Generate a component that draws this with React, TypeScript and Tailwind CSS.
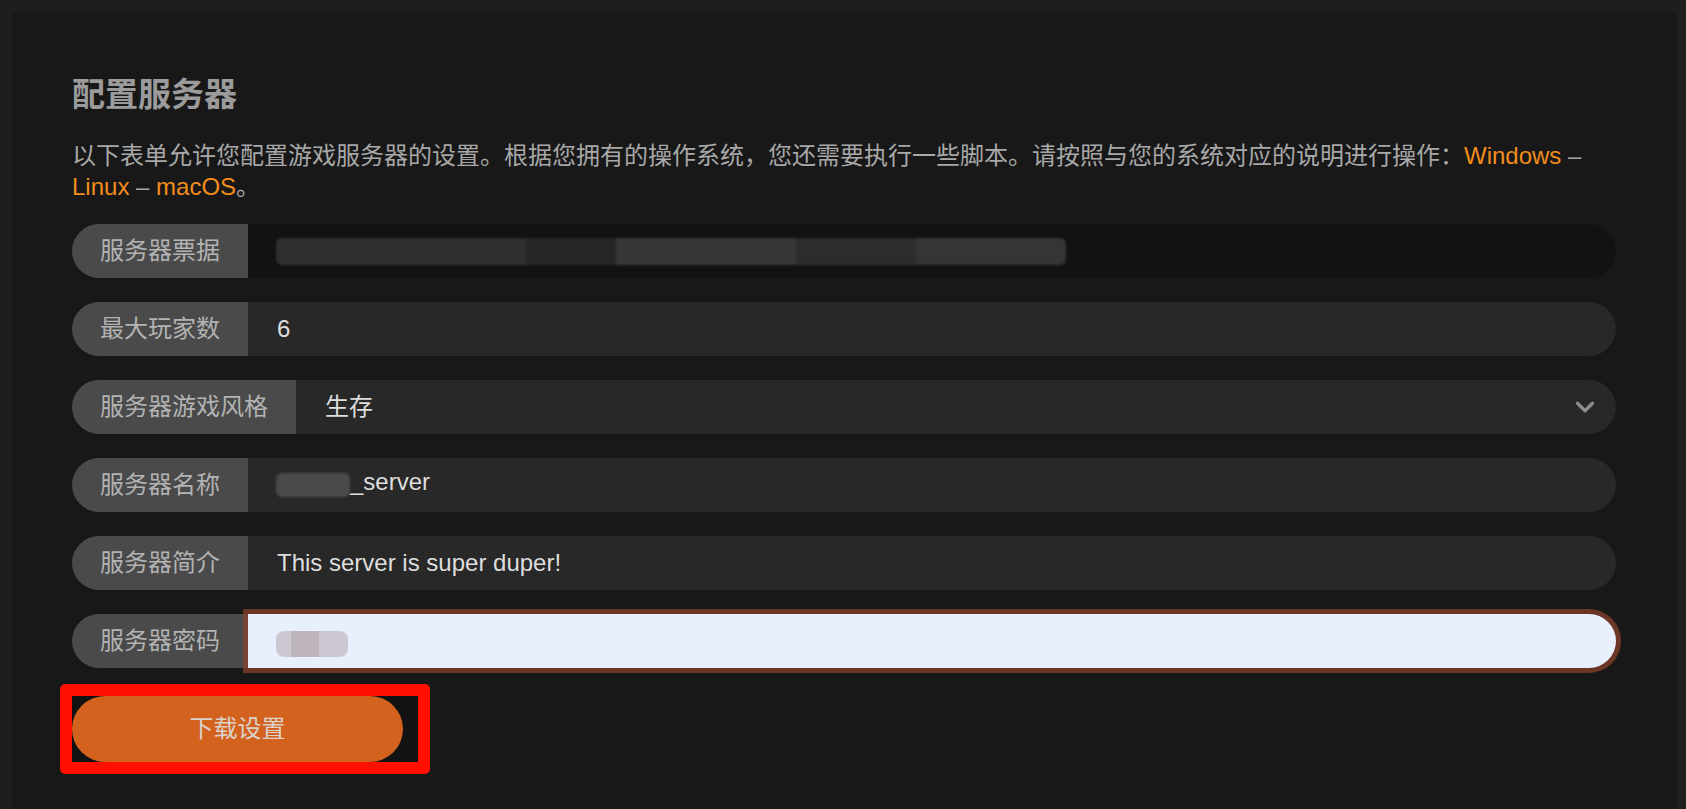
import { ChevronDown } from "lucide-react";

const font = "font-['Liberation_Sans','Noto_Sans_CJK_SC',sans-serif]";

function Addon({ children }: { children: React.ReactNode }) {
  return (
    <div className="flex h-full items-center whitespace-nowrap rounded-l-full bg-[#4a4a4a] px-7 text-[24px] text-[#b3b3b3]">
      {children}
    </div>
  );
}

export default function App() {
  return (
    <div className={`min-h-screen bg-[#1e1e1e] pl-[12px] pr-[9px] pt-[11px] ${font}`}>
      <div className="min-h-[820px] rounded-lg bg-[#181818] pl-[60px] pr-[61px] pt-[64px]">
        {/* Heading */}
        <h1 className="text-[33px] font-bold leading-[40px] text-[#9b9b9b]">配置服务器</h1>
        <p className="mt-[25px] text-[24px] leading-[31px] text-[#a8a8a8]">
          以下表单允许您配置游戏服务器的设置。根据您拥有的操作系统，您还需要执行一些脚本。请按照与您的系统对应的说明进行操作：
          <a className="text-[#f28c1c]">Windows</a> – <a className="text-[#f28c1c]">Linux</a> –{" "}
          <a className="text-[#f28c1c]">macOS</a>。
        </p>

        <div className="mt-[22px] flex flex-col gap-6">
          {/* Ticket */}
          <div className="flex h-[54px] items-stretch">
            <Addon>服务器票据</Addon>
            <div className="flex flex-1 items-center rounded-r-full bg-[#121212] pl-[28px]">
              <div className="flex h-[27px] w-[790px] overflow-hidden rounded-[6px] blur-[1px]">
                <div className="w-[250px] bg-[#2f2f2f]" />
                <div className="w-[90px] bg-[#262626]" />
                <div className="w-[180px] bg-[#373737]" />
                <div className="w-[120px] bg-[#2c2c2c]" />
                <div className="flex-1 bg-[#353535]" />
              </div>
            </div>
          </div>

          {/* Max players */}
          <div className="flex h-[54px] items-stretch">
            <Addon>最大玩家数</Addon>
            <div className="flex flex-1 items-center rounded-r-full bg-[#282828] pl-[29px] text-[24px] text-[#dedede]">6</div>
          </div>

          {/* Game style */}
          <div className="flex h-[54px] items-stretch">
            <Addon>服务器游戏风格</Addon>
            <div className="flex flex-1 items-center justify-between rounded-r-full bg-[#282828] pl-[29px] pr-[16px] text-[24px] text-[#dedede]">
              <span>生存</span>
              <ChevronDown size={30} strokeWidth={2.6} className="text-[#8d8d8d]" />
            </div>
          </div>

          {/* Name */}
          <div className="flex h-[54px] items-stretch">
            <Addon>服务器名称</Addon>
            <div className="flex flex-1 items-center rounded-r-full bg-[#282828] pl-[28px] text-[24px] text-[#dedede]">
              <div className="flex items-center">
                <div className="h-[24px] w-[74px] rounded-[6px] bg-[#4a4a4a] blur-[1px]" />
                <span className="-mt-[6px]">_server</span>
              </div>
            </div>
          </div>

          {/* Description */}
          <div className="flex h-[54px] items-stretch">
            <Addon>服务器简介</Addon>
            <div className="flex flex-1 items-center rounded-r-full bg-[#282828] pl-[29px] text-[24px] text-[#dedede]">
              This server is super duper!
            </div>
          </div>

          {/* Password */}
          <div className="flex h-[54px] items-stretch">
            <Addon>服务器密码</Addon>
            <div className="relative z-10 flex flex-1 items-center rounded-r-full bg-[#e8f0fe] pl-[28px] ring-[5px] ring-[rgba(136,65,43,0.74)]">
              <div className="mt-[5px] flex h-[26px] w-[72px] overflow-hidden rounded-[8px] bg-[#cdc8d2] blur-[0.5px]">
                <div className="ml-[15px] w-[28px] bg-[#beb4bd]" />
              </div>
            </div>
          </div>
        </div>

        {/* Download button (with red highlight box) */}
        <div className="-ml-3 mt-4 w-fit rounded-[5px] border-[12px] border-[#ff1000] bg-[#121212] pr-[15px]">
          <button className="flex h-[66px] w-[331px] items-center justify-center rounded-full bg-[#d3621f] text-[24px] text-[#dcd2ca]">
            下载设置
          </button>
        </div>
      </div>
    </div>
  );
}
